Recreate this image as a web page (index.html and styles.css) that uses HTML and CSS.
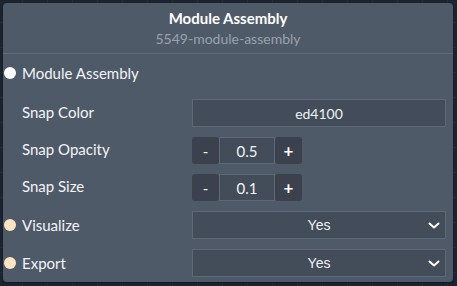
FILE: index.html
```html
<!DOCTYPE html>
<html lang="en">
<head>
    <meta charset="UTF-8">
    <meta name="viewport" content="width=device-width, initial-scale=1.0">
    <title>Module Assembly</title>
    <link rel="stylesheet" href="styles.css">
</head>
<body>
    <div class="panel">
        <div class="panel-header">
            <div class="title">Module Assembly</div>
            <div class="subtitle">5549-module-assembly</div>
        </div>

        <div class="section-title">
            <span class="dot dot-white"></span>
            <span>Module Assembly</span>
        </div>

        <div class="rows">
            <div class="row">
                <label class="label">Snap Color</label>
                <div class="text-input">ed4100</div>
            </div>
            <div class="row">
                <label class="label">Snap Opacity</label>
                <div class="stepper">
                    <button class="step-btn">-</button>
                    <div class="step-value">0.5</div>
                    <button class="step-btn plus">+</button>
                </div>
            </div>
            <div class="row">
                <label class="label">Snap Size</label>
                <div class="stepper">
                    <button class="step-btn">-</button>
                    <div class="step-value">0.1</div>
                    <button class="step-btn plus">+</button>
                </div>
            </div>
            <div class="row row-port">
                <label class="label"><span class="dot dot-cream"></span>Visualize</label>
                <div class="select">
                    <span>Yes</span>
                    <svg class="chevron" width="14" height="9" viewBox="0 0 14 9"><path d="M2.5 2.5l4.5 4 4.5-4" fill="none" stroke="#fff" stroke-width="2" stroke-linecap="round" stroke-linejoin="round"/></svg>
                </div>
            </div>
            <div class="row row-port">
                <label class="label"><span class="dot dot-cream"></span>Export</label>
                <div class="select">
                    <span>Yes</span>
                    <svg class="chevron" width="14" height="9" viewBox="0 0 14 9"><path d="M2.5 2.5l4.5 4 4.5-4" fill="none" stroke="#fff" stroke-width="2" stroke-linecap="round" stroke-linejoin="round"/></svg>
                </div>
            </div>
        </div>
    </div>
</body>
</html>
```

FILE: styles.css
```css
body {
    margin: 0;
    padding: 3px 4px 4px 3px;
    font-family: Lato, "Open Sans", sans-serif;
    background-color: #1e2330;
    background-image:
        linear-gradient(#252b38 1px, transparent 1px),
        linear-gradient(90deg, #252b38 1px, transparent 1px);
    background-size: 25px 25px;
    background-position: -3px -3px;
    height: 286px;
    box-sizing: border-box;
}
.panel {
    background-color: #4f5a69;
    border-radius: 4px;
    height: 279px;
    color: #f2f4f7;
    box-shadow: 0 1px 2px rgba(0, 0, 0, 0.4);
}
.panel-header {
    height: 51px;
    border-bottom: 1px solid #5f6b7a;
    text-align: center;
    box-sizing: border-box;
    padding-top: 6px;
}
.title {
    font-size: 15px;
    font-weight: bold;
    color: #ffffff;
    line-height: 19px;
}
.subtitle {
    font-size: 14px;
    color: #98a2ae;
    line-height: 19px;
    margin-top: 1px;
}
.section-title {
    display: flex;
    align-items: center;
    height: 24px;
    margin-top: 7px;
    padding-left: 1px;
    font-size: 15px;
}
.dot {
    display: inline-block;
    width: 12px;
    height: 12px;
    border-radius: 50%;
    margin-right: 6px;
}
.dot-white {
    background-color: #ffffff;
}
.dot-cream {
    background-color: #fde4c2;
}
.rows {
    display: flex;
    flex-direction: column;
    gap: 10px;
    margin-top: 14px;
    padding-right: 7px;
}
.row {
    display: grid;
    grid-template-columns: 189px 1fr;
    align-items: center;
}
.label {
    font-size: 15px;
    padding-left: 19px;
    padding-bottom: 3px;
    display: flex;
    align-items: center;
}
.row-port .label {
    padding-left: 1px;
    padding-bottom: 1px;
}
.text-input, .select {
    height: 28px;
    box-sizing: border-box;
    background-color: #434c59;
    border: 1px solid #5d6978;
    display: flex;
    align-items: center;
    justify-content: center;
    font-size: 14px;
    color: #eef1f4;
}
.select {
    position: relative;
    font-family: "Liberation Sans", Arial, sans-serif;
}
.chevron {
    position: absolute;
    right: 4px;
    top: 9px;
}
.stepper {
    display: flex;
    height: 27px;
    width: 110px;
}
.step-btn {
    width: 27px;
    border: none;
    border-radius: 3px;
    background-color: #3b424d;
    color: #ffffff;
    font-size: 15px;
    font-family: Lato, sans-serif;
    padding: 0;
}
.step-btn.plus {
    font-weight: bold;
    font-size: 17px;
}
.step-value {
    flex: 1;
    box-sizing: border-box;
    border: 1px solid #5d6978;
    background-color: #434c59;
    display: flex;
    align-items: center;
    justify-content: center;
    font-size: 15px;
}
```
